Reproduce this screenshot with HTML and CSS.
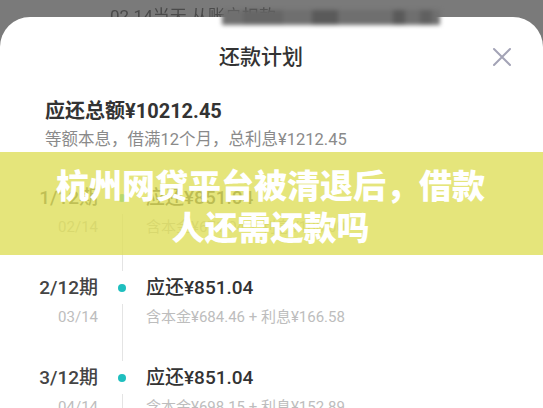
FILE: index.html
```html
<!DOCTYPE html>
<html lang="zh-CN">
<head>
<meta charset="utf-8"/>
<title>还款计划</title>
<link rel="stylesheet" href="styles.css">
</head>
<body>
<div class="topbar"><span>02.14当天 从账户扣款</span></div>
<div class="redact">
  <span class="blk blk-a"></span>
  <span class="blk blk-b"></span>
  <span class="blk blk-c"></span>
  <span class="blk blk-d"></span>
</div>
<div class="sheet">
  <div class="sheet-head">
    <span></span>
    <h1>还款计划</h1>
    <button class="close" aria-label="关闭">
      <svg width="20" height="20" viewBox="0 0 20 20"><path d="M2 2 L18 18 M18 2 L2 18" stroke="#a3a3b6" stroke-width="2" stroke-linecap="round" fill="none"/></svg>
    </button>
  </div>
  <div class="summary">
    <div class="total">应还总额¥10212.45</div>
    <div class="terms">等额本息，借满12个月，总利息¥1212.45</div>
  </div>
  <ul class="plan">
    <li class="plan-row">
      <div class="period">1/12期</div>
      <div class="track"></div>
      <div class="amount">应还¥851.04</div>
      <div class="date">02/14</div>
      <div class="detail">含本金¥671.04 + 利息¥180.00</div>
    </li>
    <li class="plan-row">
      <div class="period">2/12期</div>
      <div class="track"></div>
      <div class="amount">应还¥851.04</div>
      <div class="date">03/14</div>
      <div class="detail">含本金¥684.46 + 利息¥166.58</div>
    </li>
    <li class="plan-row">
      <div class="period">3/12期</div>
      <div class="track"></div>
      <div class="amount">应还¥851.04</div>
      <div class="date">04/14</div>
      <div class="detail">含本金¥698.15 + 利息¥152.89</div>
    </li>
  </ul>
</div>
<div class="banner">杭州网贷平台被清退后，借款人还需还款吗</div>
</body>
</html>
```

FILE: styles.css
```css
* {
    box-sizing: border-box;
}
body {
    margin: 0;
    height: 408px;
    overflow: hidden;
    background-color: #7a7a7a;
    font-family: Roboto, "Noto Sans CJK SC", sans-serif;
    color: #333;
}
.topbar {
    height: 17px;
    overflow: hidden;
    padding: 8px 0 0 110px;
    font-size: 17px;
    line-height: 17px;
    color: #4a4a4a;
    filter: blur(0.6px);
}
.redact {
    position: absolute;
    top: 10px;
    left: 222px;
    width: 218px;
    height: 15px;
    background-color: #6f6f6f;
    filter: blur(2px);
}
.blk {
    position: absolute;
    top: 0;
    height: 15px;
    background-color: #5a5a5a;
}
.blk-a { left: 21px; width: 40px; background-color: #666; }
.blk-b { left: 90px; width: 26px; }
.blk-c { left: 171px; width: 12px; }
.blk-d { left: 198px; width: 12px; background-color: #606060; }
.sheet {
    background-color: #fff;
    border-radius: 30px 30px 0 0;
    padding-top: 25px;
    min-height: 391px;
}
.sheet-head {
    display: grid;
    grid-template-columns: 1fr auto 1fr;
    align-items: center;
    height: 30px;
    padding-right: 21px;
}
.sheet-head h1 {
    margin: 0;
    font-size: 21px;
    font-weight: 500;
    line-height: 30px;
    color: #333;
}
.close {
    justify-self: end;
    margin-right: 10px;
    width: 20px;
    height: 20px;
    padding: 0;
    border: 0;
    background: none;
}
.close svg {
    display: block;
}
.summary {
    margin-top: 25px;
    padding-left: 45px;
}
.total {
    font-size: 20px;
    font-weight: 700;
    line-height: 28px;
    color: #333;
}
.terms {
    margin-top: 4px;
    font-size: 16.5px;
    line-height: 22px;
    color: #8a8a8a;
}
.plan {
    list-style: none;
    margin: 33px 0 0;
    padding: 0 0 0 30px;
}
.plan-row {
    display: grid;
    grid-template-columns: 68px 48px 1fr;
    grid-template-rows: 28px 22px;
    row-gap: 4px;
    padding-bottom: 36px;
}
.period {
    text-align: right;
    font-size: 19px;
    font-weight: 500;
    line-height: 28px;
    color: #444;
}
.date {
    grid-column: 1;
    grid-row: 2;
    text-align: right;
    font-size: 15px;
    line-height: 22px;
    color: #bdbdbd;
}
.track {
    grid-column: 2;
    grid-row: 1 / span 2;
    position: relative;
}
.track::before {
    content: "";
    position: absolute;
    left: 50%;
    top: 10px;
    width: 8px;
    height: 8px;
    margin-left: -4px;
    border-radius: 50%;
    background-color: #1fbfbf;
}
.track::after {
    content: "";
    position: absolute;
    left: 50%;
    top: 30px;
    bottom: -33px;
    width: 1px;
    background-color: #e4e4e4;
}
.amount {
    font-size: 19px;
    font-weight: 500;
    line-height: 28px;
    color: #333;
}
.detail {
    grid-column: 3;
    grid-row: 2;
    font-size: 15px;
    line-height: 22px;
    color: #bdbdbd;
}
.banner {
    position: absolute;
    top: 152px;
    left: 0;
    right: 0;
    height: 103px;
    padding: 11px 46px 0 44px;
    background-color: rgba(222, 222, 90, 0.8);
    color: #fff;
    font-family: "Noto Sans CJK SC", sans-serif;
    font-size: 33px;
    font-weight: 900;
    line-height: 42px;
    text-align: center;
}
```
